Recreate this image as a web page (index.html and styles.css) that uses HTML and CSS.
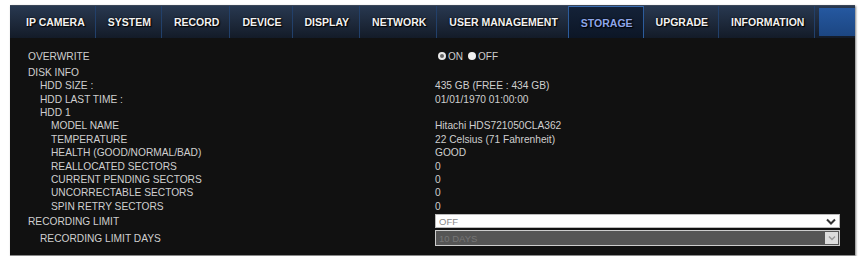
FILE: index.html
```html
<!DOCTYPE html>
<html lang="en">
<head>
    <meta charset="UTF-8">
    <title>Storage</title>
    <link rel="stylesheet" href="styles.css">
</head>
<body>
    <div class="panel">
        <!-- Menu -->
        <div class="menu">
            <a class="tab">IP CAMERA</a>
            <a class="tab">SYSTEM</a>
            <a class="tab">RECORD</a>
            <a class="tab">DEVICE</a>
            <a class="tab">DISPLAY</a>
            <a class="tab">NETWORK</a>
            <a class="tab">USER MANAGEMENT</a>
            <a class="tab active">STORAGE</a>
            <a class="tab">UPGRADE</a>
            <a class="tab">INFORMATION</a>
            <span class="menu-end"></span>
        </div>

        <!-- Storage settings -->
        <div class="content">
            <div class="row row-tall">
                <div class="label">OVERWRITE</div>
                <div class="value">
                    <span class="radio ring"></span><span class="opt">ON</span>
                    <span class="radio filled"></span><span class="opt">OFF</span>
                </div>
            </div>
            <div class="row row-gap"><div class="label">DISK INFO</div><div class="value"></div></div>
            <div class="row"><div class="label lv1">HDD SIZE :</div><div class="value">435 GB (FREE : 434 GB)</div></div>
            <div class="row"><div class="label lv1">HDD LAST TIME :</div><div class="value">01/01/1970 01:00:00</div></div>
            <div class="row"><div class="label lv1">HDD 1</div><div class="value"></div></div>
            <div class="row"><div class="label lv2">MODEL NAME</div><div class="value">Hitachi HDS721050CLA362</div></div>
            <div class="row"><div class="label lv2">TEMPERATURE</div><div class="value">22 Celsius (71 Fahrenheit)</div></div>
            <div class="row"><div class="label lv2">HEALTH (GOOD/NORMAL/BAD)</div><div class="value">GOOD</div></div>
            <div class="row"><div class="label lv2">REALLOCATED SECTORS</div><div class="value">0</div></div>
            <div class="row"><div class="label lv2">CURRENT PENDING SECTORS</div><div class="value">0</div></div>
            <div class="row"><div class="label lv2">UNCORRECTABLE SECTORS</div><div class="value">0</div></div>
            <div class="row"><div class="label lv2">SPIN RETRY SECTORS</div><div class="value">0</div></div>
            <div class="row row-select">
                <div class="label">RECORDING LIMIT</div>
                <div class="value">
                    <div class="select">
                        <span>OFF</span>
                        <svg width="10" height="7" viewBox="0 0 10 7"><path d="M1 1.5 L5 5.5 L9 1.5" fill="none" stroke="#333" stroke-width="2"/></svg>
                    </div>
                </div>
            </div>
            <div class="row row-select">
                <div class="label lv1">RECORDING LIMIT DAYS</div>
                <div class="value">
                    <div class="select disabled">
                        <span>10 DAYS</span>
                        <span class="chev-box">
                            <svg width="8" height="6" viewBox="0 0 8 6"><path d="M1 1.5 L4 4.5 L7 1.5" fill="none" stroke="#999" stroke-width="1.5"/></svg>
                        </span>
                    </div>
                </div>
            </div>
        </div>
    </div>
</body>
</html>
```

FILE: styles.css
```css
/* Reset */
* {
    margin: 0;
    padding: 0;
    box-sizing: border-box;
}

body {
    background-color: #fff;
    font-family: 'Liberation Sans', Arial, sans-serif;
}

/* Panel */
.panel {
    margin: 5px 0 0 10px;
    width: 845px;
    height: 251px;
    background-color: #111;
    box-shadow: 1px 1px 2px rgba(0, 0, 0, 0.5);
    border-bottom: 1px solid #888;
    display: flex;
    flex-direction: column;
}

/* Menu bar */
.menu {
    height: 33px;
    display: flex;
    align-items: stretch;
    background: linear-gradient(#283850, #1c2738 60%, #131b28);
    border-top: 1px solid #3a4658;
    padding-left: 4px;
}

.tab {
    display: flex;
    align-items: center;
    padding: 0 10px 0 12px;
    color: #f2f2f2;
    font-size: 10.5px;
    font-weight: bold;
    text-shadow: 0 0 2px #000, 1px 1px 1px #000;
    border-right: 1px solid #22406a;
    white-space: nowrap;
}

.tab.active {
    color: #8ea6ea;
    background: linear-gradient(#142238, #0c1626);
    border-left: 1px solid #2c5c9c;
    border-right: 1px solid #2c5c9c;
    border-top: 1px solid #3a6cb0;
    margin-left: -1px;
}

.menu-end {
    width: 36px;
    margin: 2px 0 2px auto;
    background: linear-gradient(#2558a0, #1c4682);
}

/* Content */
.content {
    padding-top: 11px;
    color: #cfcfcf;
    font-size: 10.2px;
}

.row {
    display: flex;
    align-items: center;
    height: 13.4px;
    white-space: nowrap;
}

.row-tall {
    height: 14px;
}

.row-gap {
    height: 16px;
    padding-top: 2px;
}

.label {
    width: 425px;
    flex-shrink: 0;
    padding-left: 18px;
}

.label.lv1 {
    padding-left: 30px;
}

.label.lv2 {
    padding-left: 41px;
}

.value {
    display: flex;
    align-items: center;
}

/* Radio buttons */
.radio {
    display: inline-block;
    width: 8px;
    height: 8px;
    border-radius: 50%;
    margin-left: 3px;
}

.radio.ring {
    border: 2px solid #e8e8e8;
    background-color: #666;
}

.radio.filled {
    background-color: #f0f0f0;
    margin-left: 5px;
}

.opt {
    margin-left: 2px;
    font-size: 10px;
}

/* Selects */
.row-select {
    height: 17px;
}

.select {
    width: 405px;
    height: 14px;
    background-color: #fff;
    border: 1px solid #bbb;
    display: flex;
    align-items: center;
    justify-content: space-between;
    padding: 0 3px;
    color: #888;
    font-size: 9.5px;
}

.select.disabled {
    height: 16px;
    background-color: #555;
    border: 1px solid #ccc;
    color: #777;
    padding-right: 1px;
}

.chev-box {
    width: 13px;
    height: 12px;
    background-color: #ddd;
    display: flex;
    align-items: center;
    justify-content: center;
}
```
